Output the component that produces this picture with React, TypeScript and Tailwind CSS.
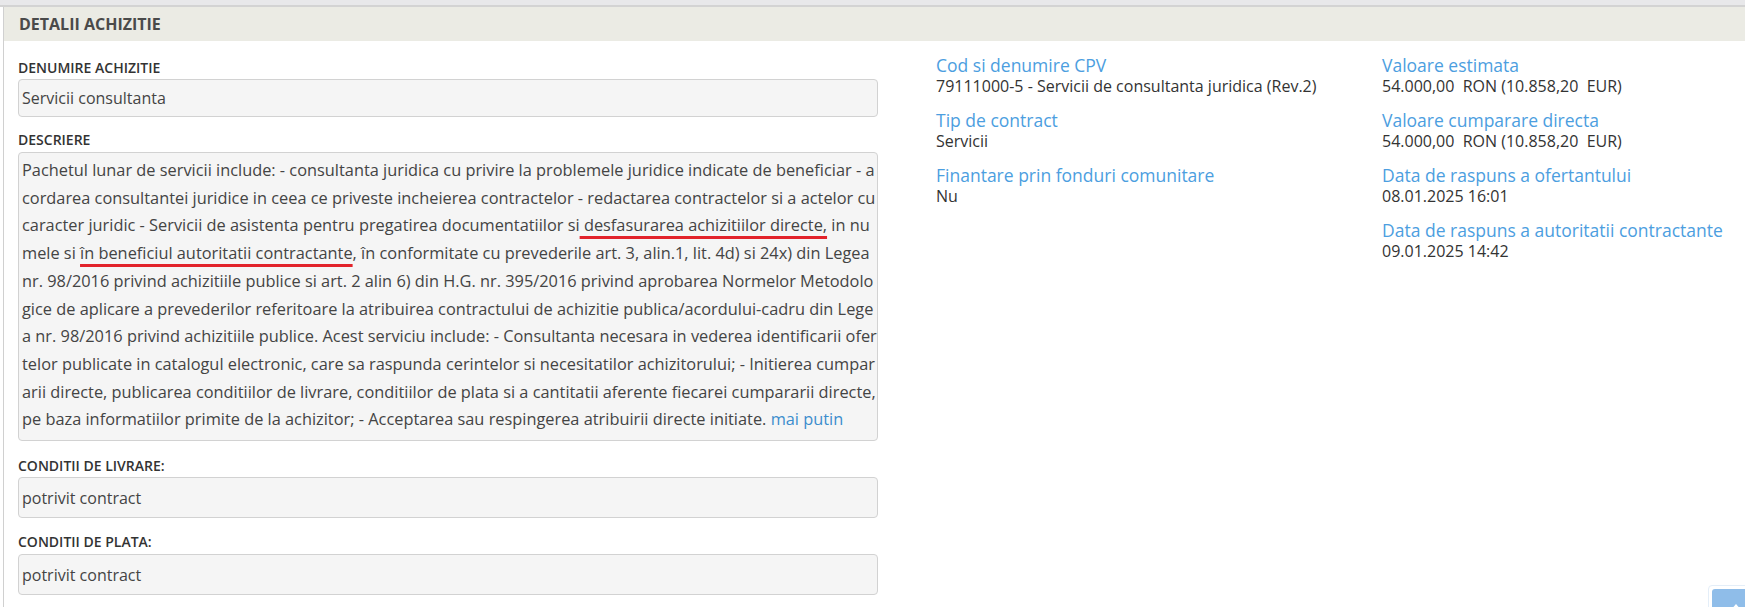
import React from 'react';

const Label: React.FC<{ children: React.ReactNode; className?: string }> = ({ children, className = '' }) => (
  <div className={`text-[14px] leading-[18px] font-semibold uppercase text-[#333] ${className}`}>{children}</div>
);

const Field: React.FC<{ children: React.ReactNode; className?: string }> = ({ children, className = '' }) => (
  <div
    className={`flex items-center rounded-[4px] border border-[#d2d2d2] bg-[#f5f5f5] px-[3px] text-[16px] text-[#444] ${className}`}
  >
    {children}
  </div>
);

const Info: React.FC<{ title: string; value: string }> = ({ title, value }) => (
  <div className="mb-[13px]">
    <div className="text-[17.5px] leading-[21px] text-[#4c9ee0]">{title}</div>
    <div className="whitespace-pre text-[16px] leading-[21px] text-[#333]">{value}</div>
  </div>
);

const Mark: React.FC<{ children: React.ReactNode }> = ({ children }) => (
  <span className="underline decoration-[#e2232b] decoration-[3px] underline-offset-[5px]">{children}</span>
);

export default function App() {
  const lines: React.ReactNode[] = [
    'Pachetul lunar de servicii include: - consultanta juridica cu privire la problemele juridice indicate de beneficiar - a',
    'cordarea consultantei juridice in ceea ce priveste incheierea contractelor - redactarea contractelor si a actelor cu',
    <>
      caracter juridic - Servicii de asistenta pentru pregatirea documentatiilor si<Mark> desfasurarea achizitiilor directe,</Mark> in nu
    </>,
    <>
      mele si <Mark>în beneficiul autoritatii contractante</Mark>, în conformitate cu prevederile art. 3, alin.1, lit. 4d) si 24x) din Legea
    </>,
    'nr. 98/2016 privind achizitiile publice si art. 2 alin 6) din H.G. nr. 395/2016 privind aprobarea Normelor Metodolo',
    'gice de aplicare a prevederilor referitoare la atribuirea contractului de achizitie publica/acordului-cadru din Lege',
    'a nr. 98/2016 privind achizitiile publice. Acest serviciu include: - Consultanta necesara in vederea identificarii ofer',
    'telor publicate in catalogul electronic, care sa raspunda cerintelor si necesitatilor achizitorului; - Initierea cumpar',
    'arii directe, publicarea conditiilor de livrare, conditiilor de plata si a cantitatii aferente fiecarei cumpararii directe,',
    <>
      pe baza informatiilor primite de la achizitor; - Acceptarea sau respingerea atribuirii directe initiate.{' '}
      <span className="text-[#3c8dcd]">mai putin</span>
    </>,
  ];

  return (
    <div
      className="relative h-[607px] w-[1745px] overflow-hidden bg-white"
      style={{ fontFamily: '"Open Sans", "Liberation Sans", sans-serif' }}
    >
      {/* top strip */}
      <div className="h-[5px] bg-[#e8e8ea]" />
      <div className="h-[2px] bg-[#d3d3d3]" />

      <div className="ml-[3px] h-[600px] border-l border-[#d0d0d0]">
        <div className="flex h-[34px] items-center bg-[#ebebe4] pl-[15px] text-[16px] font-bold text-[#4a4a4a]">
          DETALII ACHIZITIE
        </div>

        <div className="flex pl-[14px]">
          {/* left column */}
          <div className="w-[860px] pt-[18px]">
            <Label className="mb-[2px]">Denumire achizitie</Label>
            <Field className="h-[38px]">Servicii consultanta</Field>

            <Label className="mt-[14px] mb-[3px]">Descriere</Label>
            <div className="h-[289px] rounded-[4px] border border-[#d2d2d2] bg-[#f5f5f5] pl-[3px] pt-[4px] text-[16.35px] leading-[27.7px] text-[#444]">
              {lines.map((l, i) => (
                <div key={i} className="whitespace-nowrap">
                  {l}
                </div>
              ))}
            </div>

            <Label className="mt-[16px] mb-[2px]">Conditii de livrare:</Label>
            <Field className="h-[41px]">potrivit contract</Field>

            <Label className="mt-[15px] mb-[3px]">Conditii de plata:</Label>
            <Field className="h-[41px]">potrivit contract</Field>
          </div>

          {/* middle column */}
          <div className="ml-[58px] w-[446px] pt-[14px]">
            <Info title="Cod si denumire CPV" value="79111000-5 - Servicii de consultanta juridica (Rev.2)" />
            <Info title="Tip de contract" value="Servicii" />
            <Info title="Finantare prin fonduri comunitare" value="Nu" />
          </div>

          {/* right column */}
          <div className="pt-[14px]">
            <Info title="Valoare estimata" value="54.000,00  RON (10.858,20  EUR)" />
            <Info title="Valoare cumparare directa" value="54.000,00  RON (10.858,20  EUR)" />
            <Info title="Data de raspuns a ofertantului" value="08.01.2025 16:01" />
            <Info title="Data de raspuns a autoritatii contractante" value="09.01.2025 14:42" />
          </div>
        </div>
      </div>

      {/* scroll-to-top button */}
      <div className="absolute left-[1708px] top-[585px] h-[44px] w-[44px] rounded-tl-[4px] border border-[#e4eef8] bg-white p-[3px]">
        <div className="relative h-full w-full rounded-tl-[3px] bg-[#8fbde9]">
          <div className="absolute left-[18px] top-[15px] h-0 w-0 border-x-[6px] border-b-[7px] border-x-transparent border-b-white" />
        </div>
      </div>
    </div>
  );
}
